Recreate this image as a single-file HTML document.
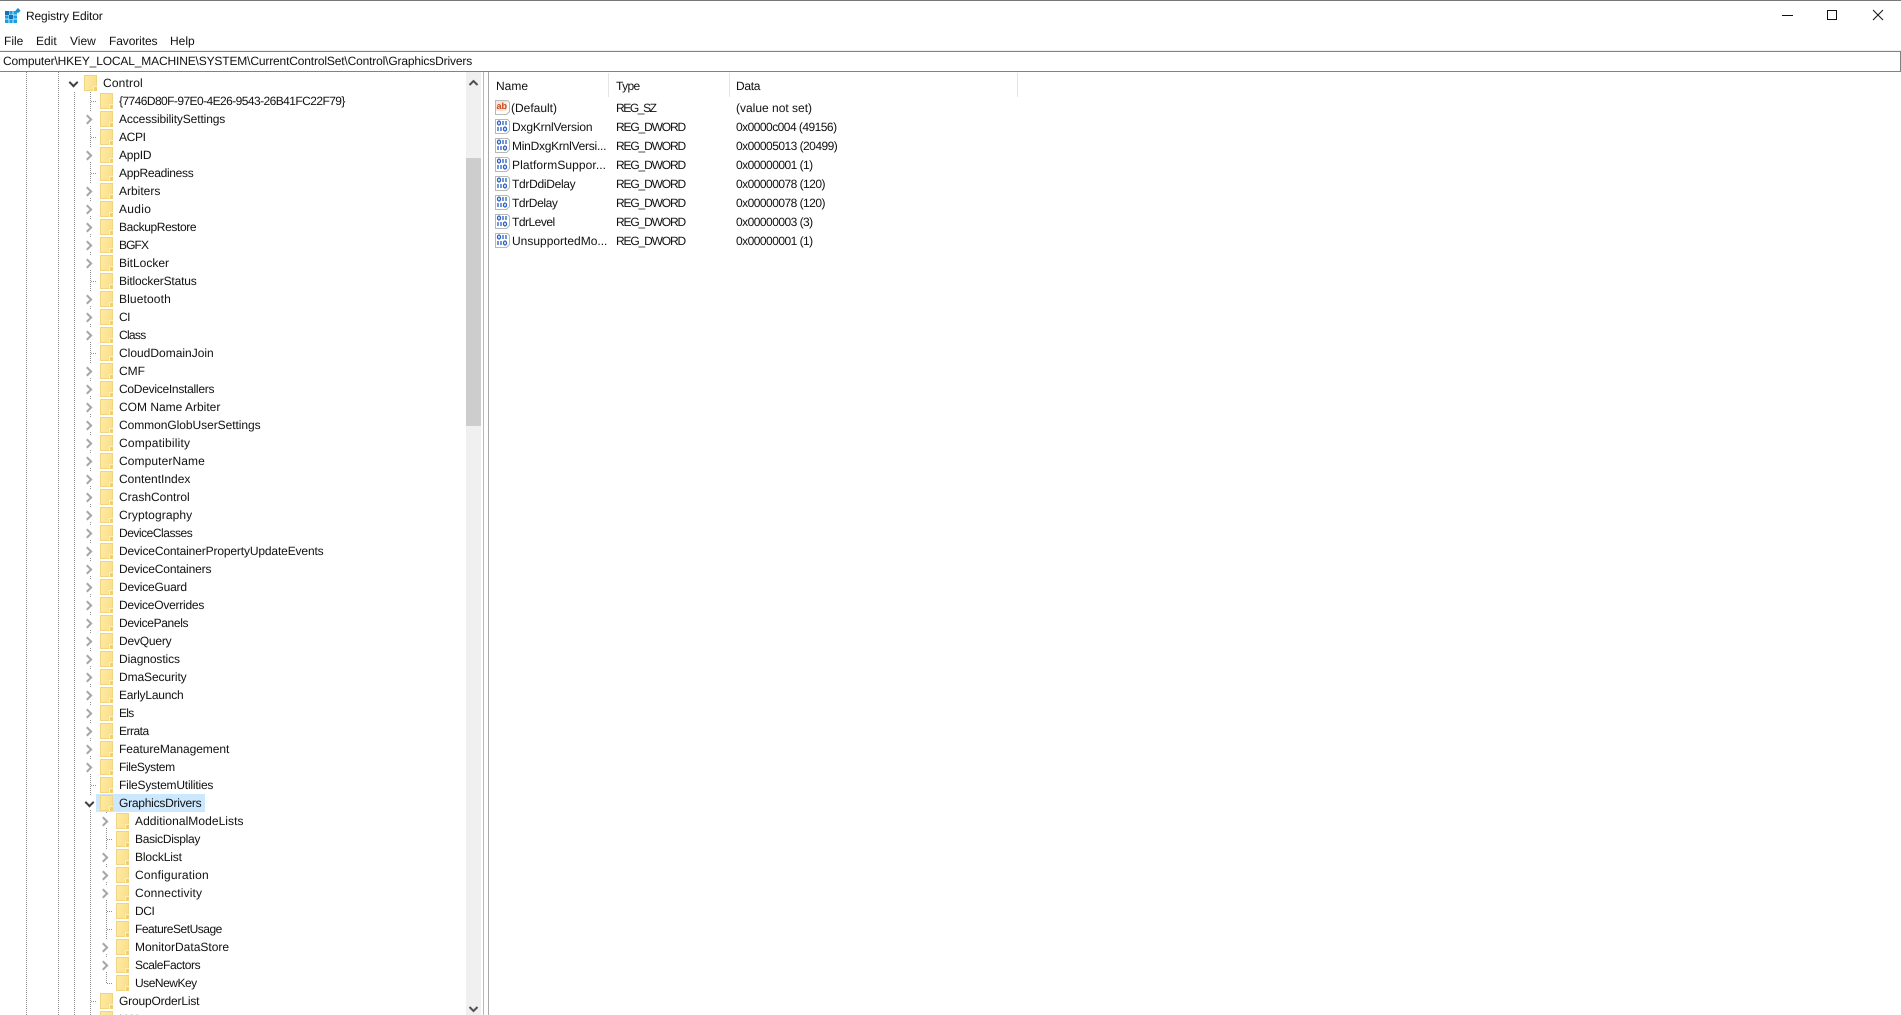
<!DOCTYPE html>
<html><head><meta charset="utf-8"><title>Registry Editor</title>
<style>
*,*:before,*:after{box-sizing:border-box}
html,body{margin:0;padding:0;width:1901px;height:1015px;overflow:hidden;background:#fff;font-family:"Liberation Sans",sans-serif;font-size:12px;color:#111;text-rendering:geometricPrecision}
#all{position:absolute;left:0;top:0;width:1901px;height:1015px;filter:blur(.3px)}
.a{position:absolute;white-space:nowrap}
#tree{position:absolute;left:0;top:72px;width:466px;height:943px;overflow:hidden}
.v{position:absolute;width:1px;background:repeating-linear-gradient(#909090 0 1px,transparent 1px 2px)}
#rows{position:absolute;left:0;top:2px;width:466px}
.row{position:relative;height:18px;line-height:18px;white-space:nowrap}
.row span{position:absolute;top:0}
.f{position:absolute;width:13px;height:16px;top:1px;background:linear-gradient(100deg,#fdeaa4,#fbdf88);border:1px solid #f0d480}
.f:after{content:"";position:absolute;right:-1px;bottom:-1px;width:4px;height:5px;background:#f2cf6c;border-left:1px solid #fff0bc;border-top:1px solid #fff0bc}
.d0 .f{left:84px}.d0 span{left:103px}
.d1 .f{left:100px}.d1 span{left:119px}
.d2 .f{left:116px}.d2 span{left:135px}
.st{position:absolute;top:9px;width:6px;height:1px;background:repeating-linear-gradient(90deg,#909090 0 1px,transparent 1px 2px)}
.d1 .st{left:91px}.d2 .st{left:107px}
.e:before{content:"";position:absolute;top:2px;width:13px;height:14px;background:#fff}
.d1.e:before{left:84px}.d2.e:before{left:100px}
.e:after{content:"";position:absolute;top:5.5px;width:7px;height:7px;border-top:2px solid #a6a6a6;border-right:2px solid #a6a6a6;transform:rotate(45deg)}
.d1.e:after{left:83.5px}.d2.e:after{left:99.5px}
.o:before{content:"";position:absolute;top:2px;left:67px;width:13px;height:14px;background:#fff}
.o:after{content:"";position:absolute;top:4.5px;width:7px;height:7px;border-bottom:2px solid #404040;border-right:2px solid #404040;transform:rotate(45deg)}
.d0.o:after{left:70px}.d1.o:after{left:86px}
.d1.o:before{left:83px}
.sel{position:absolute;left:96px;top:0;width:109px;height:18px;background:#cce8ff}
.l{position:absolute;height:19px;line-height:19px;white-space:nowrap}
.ty{letter-spacing:-1.15px}
.da{letter-spacing:-.53px}
.ic{position:absolute;left:495px;width:15px;height:16px}
</style></head><body><div id="all">

<div class="a" style="left:0;top:0;width:1901px;height:1px;background:#777"></div>
<svg class="a" style="left:5px;top:8px" width="16" height="16" viewBox="0 0 16 16">
<rect x="0" y="3" width="12" height="12" fill="#19a0df"/>
<path d="M4 3v12M8 3v12M0 7h12M0 11h12" stroke="#bfe6f7" stroke-width="1"/>
<rect x="0" y="3" width="4" height="4" fill="#1a6fb0"/><rect x="4" y="7" width="4" height="4" fill="#1a6fb0"/>
<path d="M13 0l2.6 2.6L13 5.2l-2.6-2.6z" fill="#2090c8"/>
</svg>
<div class="a" style="left:26px;top:9px;line-height:14px;letter-spacing:-.14px">Registry Editor</div>

<div class="a" style="left:4px;top:34px;line-height:14px">File</div>
<div class="a" style="left:36px;top:34px;line-height:14px">Edit</div>
<div class="a" style="left:70px;top:34px;line-height:14px">View</div>
<div class="a" style="left:109px;top:34px;line-height:14px;letter-spacing:-.1px">Favorites</div>
<div class="a" style="left:170px;top:34px;line-height:14px">Help</div>

<svg class="a" style="left:1775px;top:5px" width="120" height="22" viewBox="0 0 120 22" fill="none" stroke="#111" stroke-width="1">
<path d="M7 10.5h11"/><rect x="52.5" y="5.5" width="9" height="9"/><path d="M98 5l10 10M108 5l-10 10"/>
</svg>

<div class="a" style="left:0;top:50px;width:1901px;height:1px;background:#efefef"></div>
<div class="a" style="left:0;top:51px;width:1901px;height:21px;border:1px solid #828282;border-left:0;background:#fff"></div>
<div class="a" style="left:3px;top:54px;line-height:15px;letter-spacing:-.155px">Computer\HKEY_LOCAL_MACHINE\SYSTEM\CurrentControlSet\Control\GraphicsDrivers</div>

<div id="tree">
<div class="v" style="left:26px;top:0;height:943px"></div>
<div class="v" style="left:58px;top:0;height:943px"></div>
<div class="v" style="left:74px;top:20px;height:923px"></div>
<div class="v" style="left:90px;top:20px;height:923px"></div>
<div class="v" style="left:106px;top:740px;height:172px"></div>
<div id="rows">
<div class="row d0 o"><i class="f"></i><span style="letter-spacing:.17px">Control</span></div>
<div class="row d1"><i class="st"></i><i class="f"></i><span style="letter-spacing:-.57px">{7746D80F-97E0-4E26-9543-26B41FC22F79}</span></div>
<div class="row d1 e"><i class="f"></i><span style="letter-spacing:-.12px">AccessibilitySettings</span></div>
<div class="row d1"><i class="st"></i><i class="f"></i><span style="letter-spacing:-.35px">ACPI</span></div>
<div class="row d1 e"><i class="f"></i><span style="letter-spacing:-.2px">AppID</span></div>
<div class="row d1"><i class="st"></i><i class="f"></i><span style="letter-spacing:-.3px">AppReadiness</span></div>
<div class="row d1 e"><i class="f"></i><span>Arbiters</span></div>
<div class="row d1 e"><i class="f"></i><span style="letter-spacing:.3px">Audio</span></div>
<div class="row d1 e"><i class="f"></i><span style="letter-spacing:-.37px">BackupRestore</span></div>
<div class="row d1 e"><i class="f"></i><span style="letter-spacing:-.9px">BGFX</span></div>
<div class="row d1 e"><i class="f"></i><span>BitLocker</span></div>
<div class="row d1"><i class="st"></i><i class="f"></i><span style="letter-spacing:-.16px">BitlockerStatus</span></div>
<div class="row d1 e"><i class="f"></i><span style="letter-spacing:.13px">Bluetooth</span></div>
<div class="row d1 e"><i class="f"></i><span style="letter-spacing:-.5px">CI</span></div>
<div class="row d1 e"><i class="f"></i><span style="letter-spacing:-.7px">Class</span></div>
<div class="row d1"><i class="st"></i><i class="f"></i><span>CloudDomainJoin</span></div>
<div class="row d1 e"><i class="f"></i><span>CMF</span></div>
<div class="row d1 e"><i class="f"></i><span style="letter-spacing:-.27px">CoDeviceInstallers</span></div>
<div class="row d1 e"><i class="f"></i><span>COM Name Arbiter</span></div>
<div class="row d1 e"><i class="f"></i><span style="letter-spacing:-.05px">CommonGlobUserSettings</span></div>
<div class="row d1 e"><i class="f"></i><span style="letter-spacing:.19px">Compatibility</span></div>
<div class="row d1 e"><i class="f"></i><span style="letter-spacing:.1px">ComputerName</span></div>
<div class="row d1 e"><i class="f"></i><span>ContentIndex</span></div>
<div class="row d1 e"><i class="f"></i><span>CrashControl</span></div>
<div class="row d1 e"><i class="f"></i><span style="letter-spacing:.1px">Cryptography</span></div>
<div class="row d1 e"><i class="f"></i><span style="letter-spacing:-.47px">DeviceClasses</span></div>
<div class="row d1 e"><i class="f"></i><span style="letter-spacing:-.14px">DeviceContainerPropertyUpdateEvents</span></div>
<div class="row d1 e"><i class="f"></i><span style="letter-spacing:-.15px">DeviceContainers</span></div>
<div class="row d1 e"><i class="f"></i><span style="letter-spacing:-.2px">DeviceGuard</span></div>
<div class="row d1 e"><i class="f"></i><span style="letter-spacing:-.24px">DeviceOverrides</span></div>
<div class="row d1 e"><i class="f"></i><span style="letter-spacing:-.35px">DevicePanels</span></div>
<div class="row d1 e"><i class="f"></i><span style="letter-spacing:-.2px">DevQuery</span></div>
<div class="row d1 e"><i class="f"></i><span style="letter-spacing:-.1px">Diagnostics</span></div>
<div class="row d1 e"><i class="f"></i><span style="letter-spacing:-.1px">DmaSecurity</span></div>
<div class="row d1 e"><i class="f"></i><span style="letter-spacing:-.2px">EarlyLaunch</span></div>
<div class="row d1 e"><i class="f"></i><span style="letter-spacing:-.7px">Els</span></div>
<div class="row d1 e"><i class="f"></i><span style="letter-spacing:-.5px">Errata</span></div>
<div class="row d1 e"><i class="f"></i><span style="letter-spacing:-.07px">FeatureManagement</span></div>
<div class="row d1 e"><i class="f"></i><span style="letter-spacing:-.36px">FileSystem</span></div>
<div class="row d1"><i class="st"></i><i class="f"></i><span style="letter-spacing:-.2px">FileSystemUtilities</span></div>
<div class="row d1 o"><b class="sel"></b><i class="f"></i><span style="letter-spacing:-.24px">GraphicsDrivers</span></div>
<div class="row d2 e"><i class="f"></i><span style="letter-spacing:.06px">AdditionalModeLists</span></div>
<div class="row d2"><i class="st"></i><i class="f"></i><span style="letter-spacing:-.3px">BasicDisplay</span></div>
<div class="row d2 e"><i class="f"></i><span style="letter-spacing:-.13px">BlockList</span></div>
<div class="row d2 e"><i class="f"></i><span style="letter-spacing:.19px">Configuration</span></div>
<div class="row d2 e"><i class="f"></i><span style="letter-spacing:.15px">Connectivity</span></div>
<div class="row d2"><i class="st"></i><i class="f"></i><span style="letter-spacing:-.4px">DCI</span></div>
<div class="row d2"><i class="st"></i><i class="f"></i><span style="letter-spacing:-.48px">FeatureSetUsage</span></div>
<div class="row d2 e"><i class="f"></i><span>MonitorDataStore</span></div>
<div class="row d2 e"><i class="f"></i><span style="letter-spacing:-.4px">ScaleFactors</span></div>
<div class="row d2"><i class="st"></i><i class="f"></i><span style="letter-spacing:-.48px">UseNewKey</span></div>
<div class="row d1"><i class="st"></i><i class="f"></i><span style="letter-spacing:-.17px">GroupOrderList</span></div>
<div class="row d1"><i class="st"></i><i class="f"></i><span>HAL</span></div>
</div>
</div>

<!-- tree scrollbar -->
<div class="a" style="left:466px;top:72px;width:15px;height:943px;background:#f0f0f0"></div>
<div class="a" style="left:466px;top:158px;width:15px;height:268px;background:#cdcdcd"></div>
<svg class="a" style="left:466px;top:78px" width="15" height="10" viewBox="0 0 15 10" fill="none" stroke="#505050" stroke-width="2"><path d="M3.5 7l4-4 4 4"/></svg>
<svg class="a" style="left:466px;top:1004px" width="15" height="10" viewBox="0 0 15 10" fill="none" stroke="#505050" stroke-width="2"><path d="M3.5 3l4 4 4-4"/></svg>

<!-- splitter -->
<div class="a" style="left:483px;top:72px;width:1px;height:943px;background:#b8b8b8"></div>
<div class="a" style="left:488px;top:72px;width:1px;height:943px;background:#a8a8a8"></div>

<!-- list header -->
<div class="a" style="left:608px;top:73px;width:1px;height:24px;background:#e5e5e5"></div>
<div class="a" style="left:729px;top:73px;width:1px;height:24px;background:#e5e5e5"></div>
<div class="a" style="left:1017px;top:73px;width:1px;height:24px;background:#e5e5e5"></div>
<div class="l" style="left:496px;top:77px">Name</div>
<div class="l" style="left:616px;top:77px;letter-spacing:-.6px">Type</div>
<div class="l" style="left:736px;top:77px;letter-spacing:-.3px">Data</div>

<!-- list rows -->
<svg class="ic" style="top:99px" viewBox="0 0 15 16"><path d="M.5 1.5h12l2 2v9l-3 3h-11z" fill="#fff" stroke="#b8b8b8"/><rect x="1" y="2" width="11" height="10" fill="#fbe6da"/><text x="1.5" y="10" font-family="Liberation Sans" font-weight="bold" font-size="9" fill="#c8461e">ab</text></svg>
<div class="l" style="left:511px;top:99px">(Default)</div><div class="l" style="left:616px;top:99px;letter-spacing:-1.4px">REG_SZ</div><div class="l" style="left:736px;top:99px">(value not set)</div>

<svg width="0" height="0" style="position:absolute"><defs><g id="n"><path d="M.5 1.5h12l2 2v9l-3 3h-11z" fill="#fff" stroke="#b8b8b8"/><g fill="none" stroke="#2a5fbf" stroke-width="1.3"><ellipse cx="4" cy="5" rx="1.5" ry="2"/><path d="M8 3v4M11 3v4M3 9v4M6 9v4"/><ellipse cx="10" cy="11" rx="1.5" ry="2"/></g></g></defs></svg>

<svg class="ic" style="top:118px" viewBox="0 0 15 16"><use href="#n"/></svg>
<div class="l" style="left:512px;top:118px;letter-spacing:-.17px">DxgKrnlVersion</div><div class="l ty" style="left:616px;top:118px">REG_DWORD</div><div class="l da" style="left:736px;top:118px">0x0000c004 (49156)</div>
<svg class="ic" style="top:137px" viewBox="0 0 15 16"><use href="#n"/></svg>
<div class="l" style="left:512px;top:137px;letter-spacing:-.25px">MinDxgKrnlVersi...</div><div class="l ty" style="left:616px;top:137px">REG_DWORD</div><div class="l da" style="left:736px;top:137px">0x00005013 (20499)</div>
<svg class="ic" style="top:156px" viewBox="0 0 15 16"><use href="#n"/></svg>
<div class="l" style="left:512px;top:156px;letter-spacing:.08px">PlatformSuppor...</div><div class="l ty" style="left:616px;top:156px">REG_DWORD</div><div class="l da" style="left:736px;top:156px">0x00000001 (1)</div>
<svg class="ic" style="top:175px" viewBox="0 0 15 16"><use href="#n"/></svg>
<div class="l" style="left:512px;top:175px;letter-spacing:-.3px">TdrDdiDelay</div><div class="l ty" style="left:616px;top:175px">REG_DWORD</div><div class="l da" style="left:736px;top:175px">0x00000078 (120)</div>
<svg class="ic" style="top:194px" viewBox="0 0 15 16"><use href="#n"/></svg>
<div class="l" style="left:512px;top:194px;letter-spacing:-.4px">TdrDelay</div><div class="l ty" style="left:616px;top:194px">REG_DWORD</div><div class="l da" style="left:736px;top:194px">0x00000078 (120)</div>
<svg class="ic" style="top:213px" viewBox="0 0 15 16"><use href="#n"/></svg>
<div class="l" style="left:512px;top:213px;letter-spacing:-.5px">TdrLevel</div><div class="l ty" style="left:616px;top:213px">REG_DWORD</div><div class="l da" style="left:736px;top:213px">0x00000003 (3)</div>
<svg class="ic" style="top:232px" viewBox="0 0 15 16"><use href="#n"/></svg>
<div class="l" style="left:512px;top:232px">UnsupportedMo...</div><div class="l ty" style="left:616px;top:232px">REG_DWORD</div><div class="l da" style="left:736px;top:232px">0x00000001 (1)</div>

</div></body></html>
